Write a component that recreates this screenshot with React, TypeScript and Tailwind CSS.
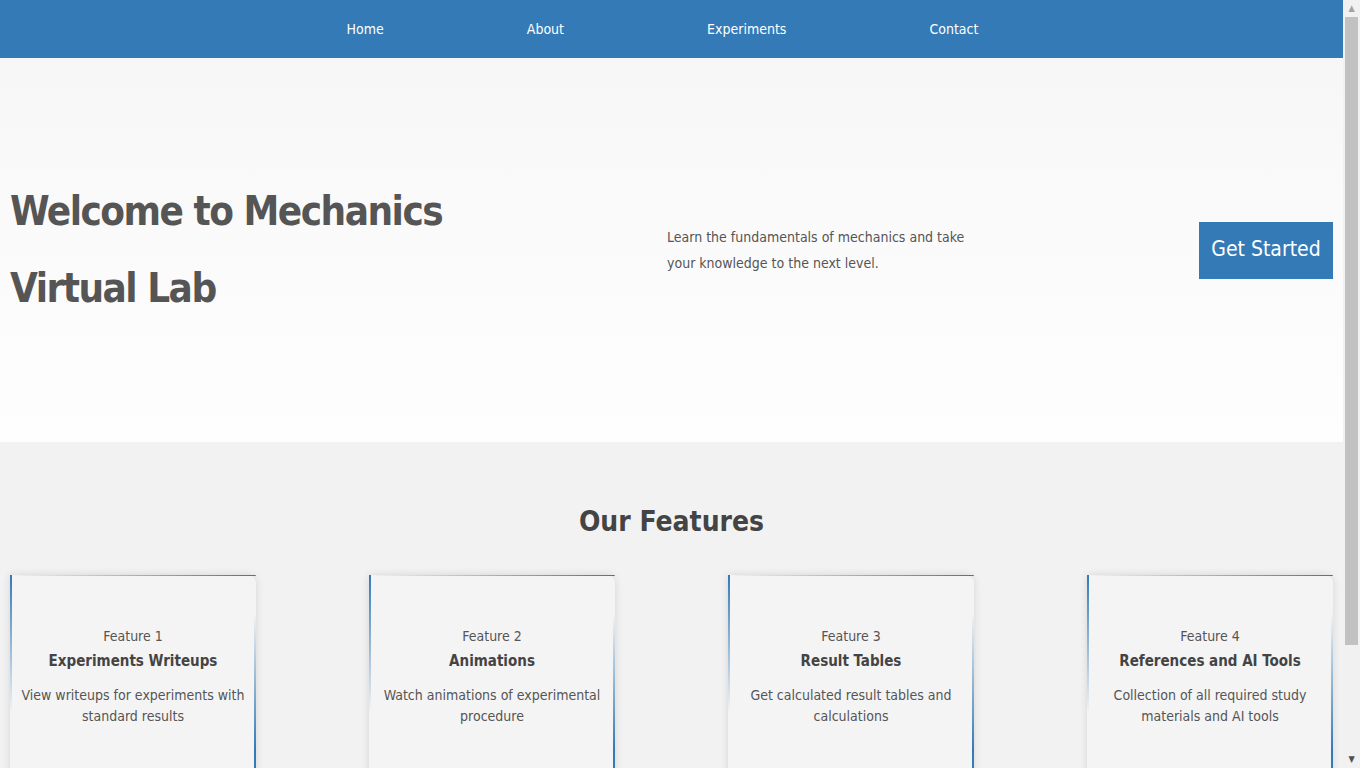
import React from "react";

const links = ["Home", "About", "Experiments", "Contact"];

const features = [
    { label: "Feature 1", title: "Experiments Writeups", desc: "View writeups for experiments with standard results" },
    { label: "Feature 2", title: "Animations", desc: "Watch animations of experimental procedure" },
    { label: "Feature 3", title: "Result Tables", desc: "Get calculated result tables and calculations" },
    { label: "Feature 4", title: "References and AI Tools", desc: "Collection of all required study materials and AI tools" },
];

const FeatureCard = ({ label, title, desc }: { label: string; title: string; desc: string }) => (
    <div className="relative w-[246px] h-[250px] bg-[#f4f4f4] rounded-tr-lg shadow-[0_0_8px_rgba(0,0,0,0.12)] px-[10px] pt-[51px] text-center">
        {/* gradient border pieces */}
        <span className="absolute left-0 top-0 w-[2px] h-[55%] bg-[linear-gradient(to_bottom,#337ab7,transparent)]" />
        <span className="absolute left-0 top-0 h-px w-full rounded-tr-lg bg-[linear-gradient(to_right,transparent,#337ab7)]" />
        <span className="absolute right-0 top-0 w-[2px] h-full bg-[linear-gradient(to_bottom,transparent_15%,#337ab7_70%)]" />
        <p className="text-[14px] text-[#555] leading-[20px]">{label}</p>
        <h3 className="text-[15px] font-bold text-[#444] leading-[22px] mt-[4px]">{title}</h3>
        <p className="text-[14px] text-[#555] leading-[21px] mt-[13px]">{desc}</p>
    </div>
);

// classic browser scrollbar look
const ScrollBar = () => (
    <div className="w-[17px] h-full shrink-0 bg-[#f1f1f1] flex flex-col items-center">
        <div className="h-[17px] flex items-center justify-center text-[9px] leading-none text-[#a3a3a3]">▲</div>
        <div className="w-[13px] h-[628px] bg-[#c1c1c1]" />
        <div className="flex-1" />
        <div className="h-[17px] flex items-center justify-center text-[9px] leading-none text-[#505050]">▼</div>
    </div>
);

const App = () => {
    return (
        <div className="h-screen flex bg-[#f2f2f2] font-['DejaVu_Sans_Condensed','DejaVu_Sans',sans-serif]">
            <main className="flex-1 min-w-0 overflow-hidden">
                <nav className="h-[58px] bg-[#337ab7] flex items-center justify-center gap-[143px] pr-[18px]">
                    {links.map((l) => (
                        <a key={l} href="#" className="text-white text-[14px]">{l}</a>
                    ))}
                </nav>

                <section className="h-[384px] bg-[linear-gradient(to_bottom,#f7f7f7,#fefefe)] flex items-center px-[10px]">
                    <h1 className="w-[657px] text-[40px] font-bold text-[#555] leading-[77px] tracking-[-1.5px]">
                        Welcome to Mechanics<br />Virtual Lab
                    </h1>
                    <p className="w-[305px] text-[14px] text-[#555] leading-[26px]">
                        Learn the fundamentals of mechanics and take your knowledge to the next level.
                    </p>
                    <button className="ml-auto w-[134px] h-[57px] bg-[#337ab7] text-white text-[21px]">Get Started</button>
                </section>

                <section className="px-[10px] pt-[57px] pb-[70px]">
                    <h2 className="text-center text-[28px] font-bold text-[#444] leading-[45px]">Our Features</h2>
                    <div className="flex justify-between mt-[31px]">
                        {features.map((f) => (
                            <FeatureCard key={f.label} {...f} />
                        ))}
                    </div>
                </section>
            </main>
            <ScrollBar />
        </div>
    );
};

export default App;
